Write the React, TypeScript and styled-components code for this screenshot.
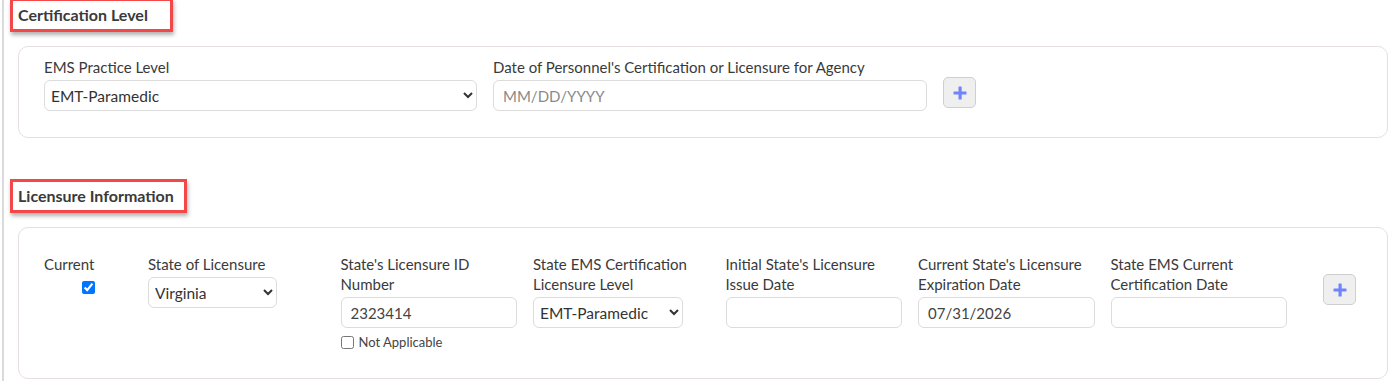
import React from "react";
import styled, { createGlobalStyle } from "styled-components";

const GlobalStyle = createGlobalStyle`
  body {
    margin: 0;
    background: #fff;
    font-family: Lato, "Noto Sans", sans-serif;
    color: #333;
  }
`;

const Page = styled.div`
  margin-left: 2px;
  border-left: 2px solid #dadada;
  padding: 5px 6px 0 14px;
  min-height: 381px;
  box-sizing: border-box;
`;

const SectionTitle = styled.div<{ $boxWidth: number; $gap: number }>`
  position: relative;
  font-size: 16px;
  font-weight: 700;
  line-height: 20px;
  color: #3a3a3a;
  margin-top: ${(p) => p.$gap}px;
  margin-bottom: 21px;

  &::after {
    content: "";
    position: absolute;
    left: -8px;
    top: -7px;
    width: ${(p) => p.$boxWidth}px;
    height: 34px;
    box-sizing: border-box;
    border: 3px solid #f44848;
    box-shadow: 1px 3px 4px rgba(0, 0, 0, 0.3);
  }
`;

const Card = styled.div<{ $top: number; $bottom: number }>`
  border: 1px solid #e8dfe0;
  border-radius: 10px;
  padding: ${(p) => p.$top}px 25px ${(p) => p.$bottom}px 25px;
`;

const Row = styled.div`
  display: flex;
  align-items: flex-start;
  gap: 16px;
`;

const Field = styled.div<{ $width: number }>`
  width: ${(p) => p.$width}px;
  flex: none;
  display: flex;
  flex-direction: column;
`;

const Label = styled.label`
  font-size: 15px;
  line-height: 20px;
  color: #3a3a3a;
  margin-bottom: 3px;
`;

const Select = styled.select<{ $width?: number }>`
  align-self: flex-start;
  width: ${(p) => (p.$width ? `${p.$width}px` : "100%")};
  height: 31px;
  font-family: Lato, sans-serif;
  font-size: 15.5px;
  color: #333;
  background: #fff;
  border: 1px solid #dcdcdc;
  border-radius: 6px;
  padding: 0 2px;
`;

const TextInput = styled.input`
  box-sizing: border-box;
  width: 100%;
  height: 31px;
  font-family: Lato, sans-serif;
  font-size: 15px;
  color: #444;
  border: 1px solid #dcdcdc;
  border-radius: 6px;
  padding: 0 9px;
  outline: none;

  &::placeholder {
    color: #8a8a8a;
  }
`;

const CheckCell = styled.div`
  display: flex;
  justify-content: center;
  padding-top: 4px;

  input {
    margin: 0;
    width: 13px;
    height: 13px;
  }
`;

const SmallCheck = styled.label`
  display: flex;
  align-items: center;
  gap: 5px;
  margin-top: 6px;
  font-size: 13px;
  color: #444;

  input {
    margin: 0;
    width: 13px;
    height: 13px;
  }
`;

const AddButton = styled.button<{ $shift?: number }>`
  flex: none;
  margin-top: 20px;
  margin-left: ${(p) => p.$shift ?? 0}px;
  width: 33px;
  height: 31px;
  display: flex;
  align-items: center;
  justify-content: center;
  background: #efefef;
  border: 1px solid #cfcfcf;
  border-radius: 5px;
  padding: 0;
`;

const PlusIcon = () => (
  <svg width="14" height="14" viewBox="0 0 14 14">
    <rect x="5.5" y="0.5" width="3.2" height="13" rx="0.6" fill="#7084fb" />
    <rect x="0.5" y="5.4" width="13" height="3.2" rx="0.6" fill="#7084fb" />
  </svg>
);

const COL = 176.5;

export default function App() {
  return (
    <>
      <GlobalStyle />
      <Page>
        <SectionTitle $boxWidth={163} $gap={0}>
          Certification Level
        </SectionTitle>
        <Card $top={10} $bottom={26}>
          <Row>
            <Field $width={433}>
              <Label>EMS Practice Level</Label>
              <Select defaultValue="EMT-Paramedic">
                <option>EMT-Paramedic</option>
              </Select>
            </Field>
            <Field $width={434}>
              <Label>Date of Personnel's Certification or Licensure for Agency</Label>
              <TextInput placeholder="MM/DD/YYYY" />
            </Field>
            <AddButton>
              <PlusIcon />
            </AddButton>
          </Row>
        </Card>

        <SectionTitle $boxWidth={177} $gap={48}>
          Licensure Information
        </SectionTitle>
        <Card $top={26} $bottom={28}>
          <Row>
            <Field $width={88}>
              <Label>Current</Label>
              <CheckCell>
                <input type="checkbox" defaultChecked />
              </CheckCell>
            </Field>
            <Field $width={COL}>
              <Label>State of Licensure</Label>
              <Select $width={129} defaultValue="Virginia">
                <option>Virginia</option>
              </Select>
            </Field>
            <Field $width={COL}>
              <Label>State's Licensure ID Number</Label>
              <TextInput defaultValue="2323414" />
              <SmallCheck>
                <input type="checkbox" />
                Not Applicable
              </SmallCheck>
            </Field>
            <Field $width={COL}>
              <Label>State EMS Certification Licensure Level</Label>
              <Select $width={150} defaultValue="EMT-Paramedic">
                <option>EMT-Paramedic</option>
              </Select>
            </Field>
            <Field $width={COL}>
              <Label>Initial State's Licensure Issue Date</Label>
              <TextInput />
            </Field>
            <Field $width={COL}>
              <Label>Current State's Licensure Expiration Date</Label>
              <TextInput defaultValue="07/31/2026" />
            </Field>
            <Field $width={COL}>
              <Label>State EMS Current Certification Date</Label>
              <TextInput />
            </Field>
            <AddButton $shift={20}>
              <PlusIcon />
            </AddButton>
          </Row>
        </Card>
      </Page>
    </>
  );
}
